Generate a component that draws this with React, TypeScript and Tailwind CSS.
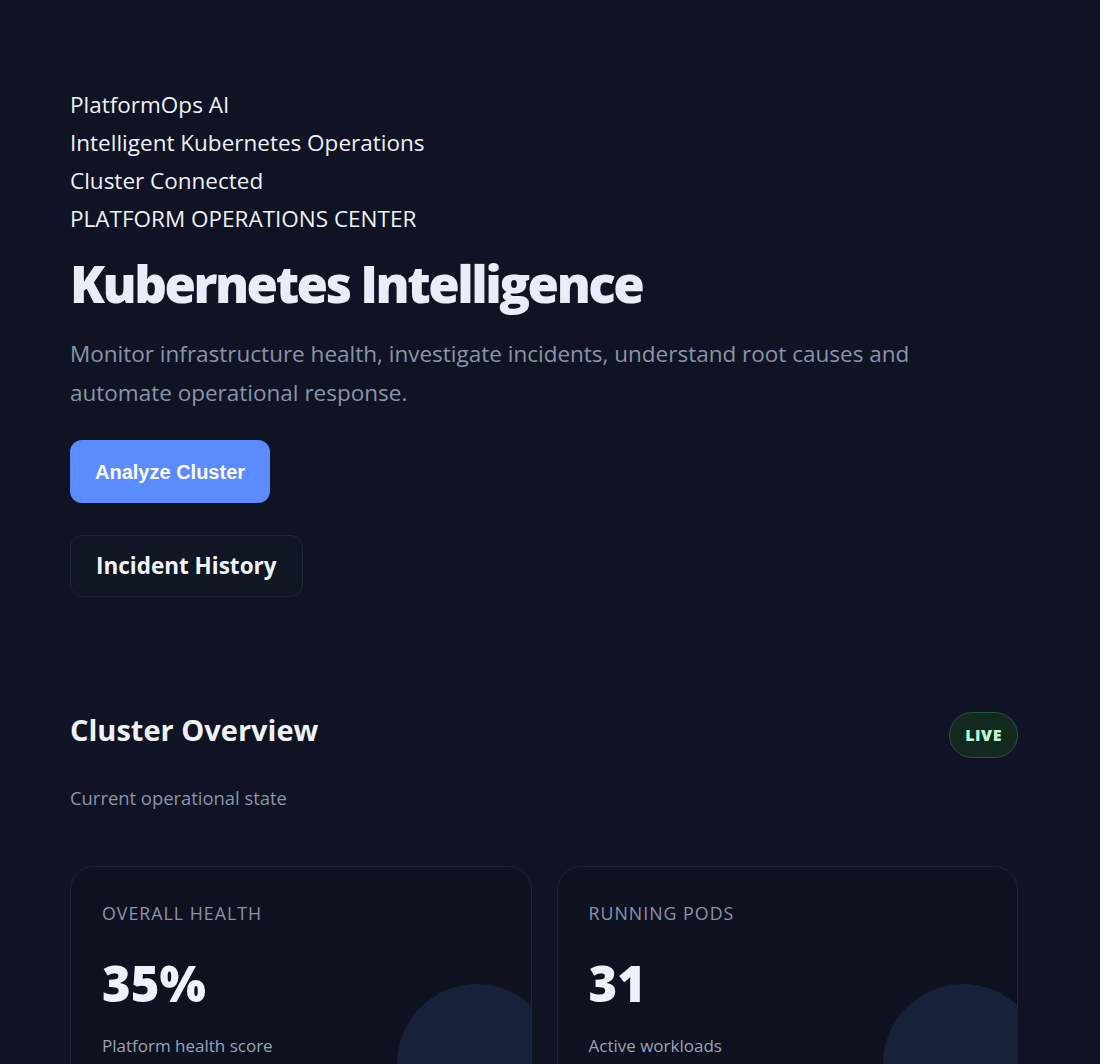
import React from "react";

const cards = [
  { label: "OVERALL HEALTH", value: "35%", sub: "Platform health score" },
  { label: "RUNNING PODS", value: "31", sub: "Active workloads" },
  { label: "ACTIVE INCIDENTS", value: "4", sub: "Requiring attention" },
  { label: "NODES", value: "3", sub: "Cluster nodes online" },
];

export default function App() {
  return (
    <div
      className="h-screen overflow-y-auto bg-[#0f1324] text-[#e6eaf2] [&::-webkit-scrollbar]:w-[6px] [&::-webkit-scrollbar-track]:bg-[#0a0d18] [&::-webkit-scrollbar-thumb]:bg-[#3b4458] [&::-webkit-scrollbar-thumb]:rounded-full"
      style={{ fontFamily: '"Open Sans", "Noto Sans", sans-serif' }}
    >
      <div className="w-[948px] ml-[70px] pt-[86px] pb-[200px]">
        <div className="text-[22.5px] leading-[38px] text-[#eef1f7]">
          <div>PlatformOps AI</div>
          <div>Intelligent Kubernetes Operations</div>
          <div>Cluster Connected</div>
          <div>PLATFORM OPERATIONS CENTER</div>
        </div>
        <h1 className="mt-[14px] text-[51px] leading-[62px] font-extrabold tracking-[-2.5px] text-[#e8edf7]">
          Kubernetes Intelligence
        </h1>
        <p className="mt-[20px] text-[22.5px] leading-[39px] text-[#8a94a8] max-w-[880px]">
          Monitor infrastructure health, investigate incidents, understand root causes and automate operational response.
        </p>
        <div className="mt-[28px] flex flex-col items-start gap-[32px]">
          <button
            className="h-[63px] px-[25px] rounded-[12px] bg-[#5b8cff] text-white text-[20px] font-bold"
            style={{ fontFamily: '"Liberation Sans", Arial, sans-serif' }}
          >
            Analyze Cluster
          </button>
          <button className="h-[62px] px-[25px] rounded-[12px] border border-[#1f2637] bg-[#111624] text-[#f1f4f9] text-[22.5px] font-bold">
            Incident History
          </button>
        </div>

        <div className="mt-[115px] flex items-start justify-between">
          <h2 className="text-[29px] leading-[36px] font-bold text-[#eef1f7]">Cluster Overview</h2>
          <span className="h-[46px] px-[15px] flex items-center rounded-full border border-[#1f5a3a] bg-[#12291f] text-[#bff5cf] text-[16px] font-extrabold tracking-[0.5px]">
            LIVE
          </span>
        </div>
        <div className="mt-[28px] text-[18.4px] leading-[24px] text-[#8a94a8]">Current operational state</div>

        <div className="mt-[56px] grid grid-cols-2 gap-[25px]">
          {cards.map((c) => (
            <div
              key={c.label}
              className="relative overflow-hidden rounded-[24px] border border-[#1d2435] bg-[#0e1120] px-[31px] pt-[34px] pb-[40px]"
            >
              <div className="text-[17.8px] leading-[24px] tracking-[1px] text-[#8a94a8]">{c.label}</div>
              <div className="mt-[27px] text-[49px] leading-[62px] font-extrabold text-[#eef2fa]">{c.value}</div>
              <div className="mt-[20px] text-[17px] leading-[24px] text-[#9aa3b5]">{c.sub}</div>
              <div className="absolute right-[-26px] top-[117px] w-[160px] h-[160px] rounded-full bg-[#18213a]" />
            </div>
          ))}
        </div>
      </div>
    </div>
  );
}
